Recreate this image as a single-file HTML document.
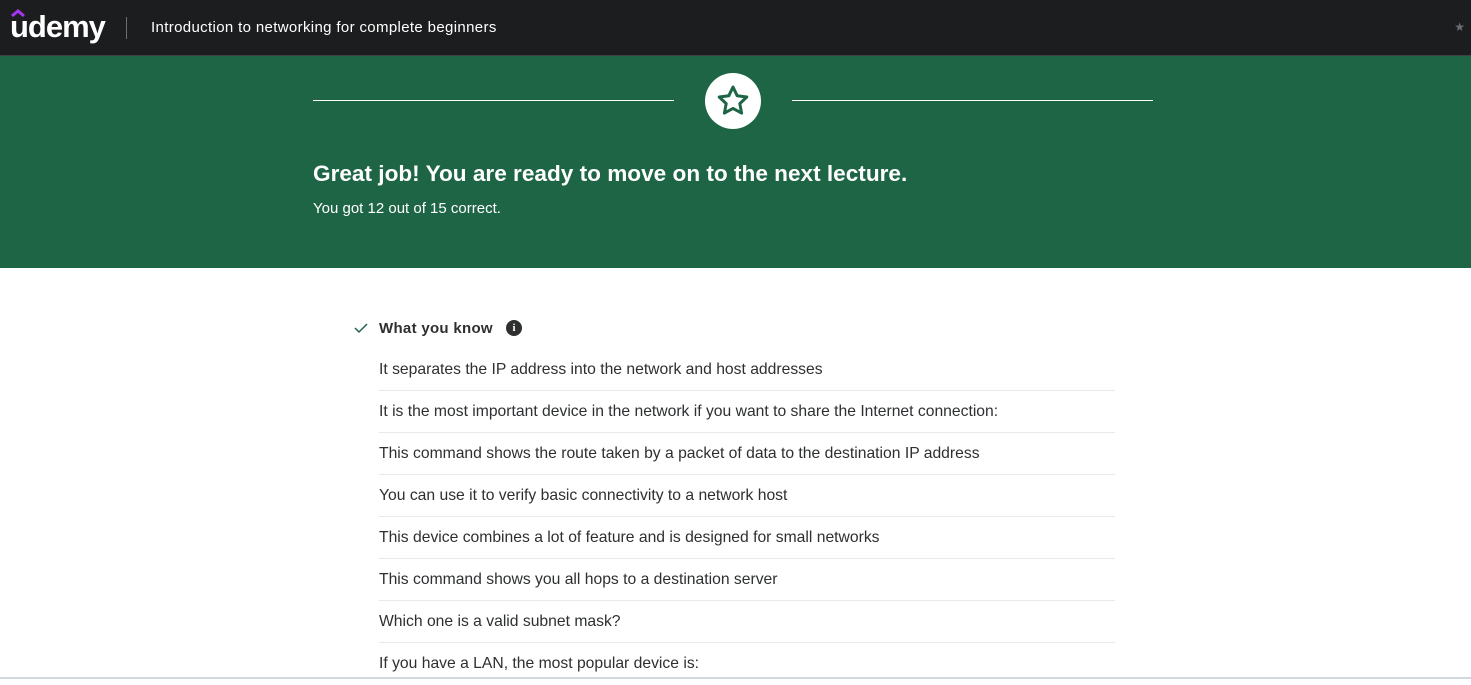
<!DOCTYPE html><html><head><style>
body{margin:0;width:1471px;height:679px;overflow:hidden;font-family:"Liberation Sans",sans-serif;background:#fff;color:#2d2f31}
.top{height:55px;background:#1c1d1f;position:relative;border-bottom:1px solid #3e4143}
.logo{position:absolute;left:10px;top:9px;color:#fff;font-size:31px;font-weight:bold;letter-spacing:-1px}
.sep{position:absolute;left:126px;top:17px;width:1px;height:22px;background:#6a6f73}
.title{position:absolute;left:151px;top:19px;color:#fff;font-size:15px;letter-spacing:0.35px}
.green{position:absolute;top:56px;left:0;width:1471px;height:212px;background:#1e6546}
.line{position:absolute;top:44px;height:1px;background:#fff;width:361px}
.circ{position:absolute;left:705px;top:17px;width:56px;height:56px;border-radius:50%;background:#fff}
h1{position:absolute;left:313px;top:105px;margin:0;color:#fff;font-size:22.6px;font-weight:bold}
.sub{position:absolute;left:313px;top:144px;color:#fff;font-size:15px}
.know{position:absolute;left:379px;top:320px;font-weight:bold;font-size:15px;letter-spacing:0.3px}
.row{position:absolute;left:379px;width:736px;height:42px;border-bottom:1px solid #e8e9eb;font-size:15.7px;line-height:42px;box-sizing:border-box}
</style></head><body>
<div class="top"><div class="logo">udemy</div><svg style="position:absolute;left:11px;top:9px" width="14" height="9"><path d="M1 7l6-5 6 5" fill="none" stroke="#a435f0" stroke-width="3"/></svg><div class="sep"></div><div class="title">Introduction to networking for complete beginners</div><div style="position:absolute;right:6px;top:20px;color:#6a6f73;font-size:12px">★</div></div>
<div class="green"><div class="line" style="left:313px"></div><div class="line" style="left:792px"></div>
<div class="circ"><svg width="56" height="56" viewBox="0 0 56 56"><path d="M28 14l4.2 8.8 9.6 1.2-7 6.6 1.8 9.5L28 35.4l-8.6 4.7 1.8-9.5-7-6.6 9.6-1.2z" fill="none" stroke="#1e6546" stroke-width="3" stroke-linejoin="round"/></svg></div>
<h1>Great job! You are ready to move on to the next lecture.</h1><div class="sub">You got 12 out of 15 correct.</div></div>
<svg style="position:absolute;left:354px;top:322px" width="14" height="12"><path d="M1 6l4 4 8-8" fill="none" stroke="#1e6546" stroke-width="1.5"/></svg>
<div class="know">What you know</div>
<div style="position:absolute;left:506px;top:320px;width:16px;height:16px;border-radius:50%;background:#2d2f31;color:#fff;font-size:11px;font-weight:bold;text-align:center;line-height:16px;font-family:'Liberation Serif',serif">i</div>
<div class="row" style="top:349px">It separates the IP address into the network and host addresses</div>
<div class="row" style="top:391px">It is the most important device in the network if you want to share the Internet connection:</div>
<div class="row" style="top:433px">This command shows the route taken by a packet of data to the destination IP address</div>
<div class="row" style="top:475px">You can use it to verify basic connectivity to a network host</div>
<div class="row" style="top:517px">This device combines a lot of feature and is designed for small networks</div>
<div class="row" style="top:559px">This command shows you all hops to a destination server</div>
<div class="row" style="top:601px">Which one is a valid subnet mask?</div>
<div class="row" style="top:643px;border:none">If you have a LAN, the most popular device is:</div>
<div style="position:absolute;left:0;top:677px;width:1471px;height:2px;background:#d1d7dc"></div>
</body></html>
